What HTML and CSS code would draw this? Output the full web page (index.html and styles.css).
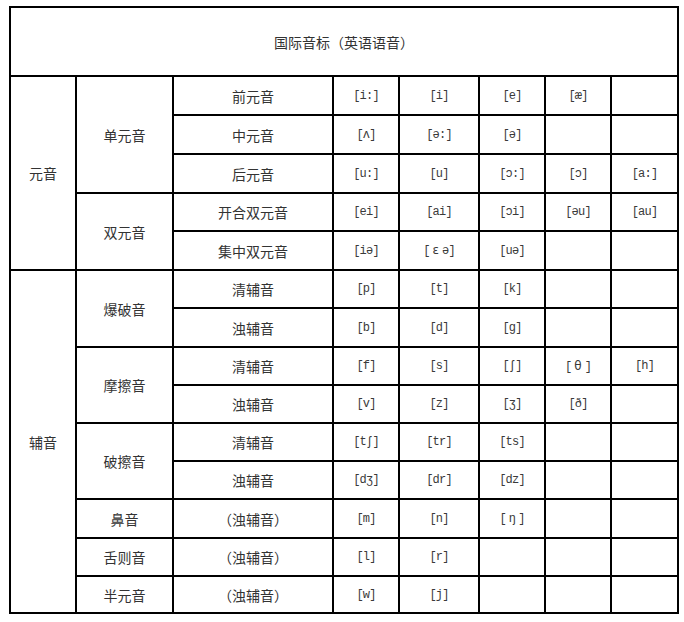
FILE: index.html
```html
<!DOCTYPE html>
<html lang="zh">
<head>
<meta charset="utf-8">
<title>国际音标（英语语音）</title>
<link rel="stylesheet" href="styles.css">
</head>
<body>
<div class="ipa-table">
  <div class="cell title">国际音标（英语语音）</div>

  <div class="cell zh c1 r-vowel">元音</div>
  <div class="cell zh c2 r-dan">单元音</div>
  <div class="cell zh c2 r-shuang">双元音</div>
  <div class="cell zh c1 r-cons">辅音</div>
  <div class="cell zh c2 r-bao">爆破音</div>
  <div class="cell zh c2 r-mo">摩擦音</div>
  <div class="cell zh c2 r-po">破擦音</div>
  <div class="cell zh c2 r-bi">鼻音</div>
  <div class="cell zh c2 r-she">舌则音</div>
  <div class="cell zh c2 r-ban">半元音</div>

  <!-- row 2 -->
  <div class="cell zh c3">前元音</div>
  <div class="cell ph">[i:]</div><div class="cell ph">[i]</div><div class="cell ph">[e]</div><div class="cell ph">[æ]</div><div class="cell"></div>
  <!-- row 3 -->
  <div class="cell zh c3">中元音</div>
  <div class="cell ph">[ʌ]</div><div class="cell ph">[ə:]</div><div class="cell ph">[ə]</div><div class="cell"></div><div class="cell"></div>
  <!-- row 4 -->
  <div class="cell zh c3">后元音</div>
  <div class="cell ph">[u:]</div><div class="cell ph">[u]</div><div class="cell ph">[ɔ:]</div><div class="cell ph">[ɔ]</div><div class="cell ph">[a:]</div>
  <!-- row 5 -->
  <div class="cell zh c3">开合双元音</div>
  <div class="cell ph">[ei]</div><div class="cell ph">[ai]</div><div class="cell ph">[ɔi]</div><div class="cell ph">[əu]</div><div class="cell ph">[au]</div>
  <!-- row 6 -->
  <div class="cell zh c3">集中双元音</div>
  <div class="cell ph">[iə]</div><div class="cell ph"><span>[<span class="gap"></span><span class="wide">ε</span><span class="gap"></span>ə]</span></div><div class="cell ph">[uə]</div><div class="cell"></div><div class="cell"></div>
  <!-- row 7 -->
  <div class="cell zh c3">清辅音</div>
  <div class="cell ph">[p]</div><div class="cell ph">[t]</div><div class="cell ph">[k]</div><div class="cell"></div><div class="cell"></div>
  <!-- row 8 -->
  <div class="cell zh c3">浊辅音</div>
  <div class="cell ph">[b]</div><div class="cell ph">[d]</div><div class="cell ph">[g]</div><div class="cell"></div><div class="cell"></div>
  <!-- row 9 -->
  <div class="cell zh c3">清辅音</div>
  <div class="cell ph">[f]</div><div class="cell ph">[s]</div><div class="cell ph">[ʃ]</div><div class="cell ph"><span>[<span class="gap"></span><span class="wide">θ</span><span class="gap"></span>]</span></div><div class="cell ph">[h]</div>
  <!-- row 10 -->
  <div class="cell zh c3">浊辅音</div>
  <div class="cell ph">[v]</div><div class="cell ph">[z]</div><div class="cell ph">[ʒ]</div><div class="cell ph">[ð]</div><div class="cell"></div>
  <!-- row 11 -->
  <div class="cell zh c3">清辅音</div>
  <div class="cell ph">[tʃ]</div><div class="cell ph">[tr]</div><div class="cell ph">[ts]</div><div class="cell"></div><div class="cell"></div>
  <!-- row 12 -->
  <div class="cell zh c3">浊辅音</div>
  <div class="cell ph">[dʒ]</div><div class="cell ph">[dr]</div><div class="cell ph">[dz]</div><div class="cell"></div><div class="cell"></div>
  <!-- row 13 -->
  <div class="cell zh c3">（浊辅音）</div>
  <div class="cell ph">[m]</div><div class="cell ph">[n]</div><div class="cell ph"><span>[<span class="gap"></span>ŋ<span class="gap"></span>]</span></div><div class="cell"></div><div class="cell"></div>
  <!-- row 14 -->
  <div class="cell zh c3">（浊辅音）</div>
  <div class="cell ph">[l]</div><div class="cell ph">[r]</div><div class="cell"></div><div class="cell"></div><div class="cell"></div>
  <!-- row 15 -->
  <div class="cell zh c3">（浊辅音）</div>
  <div class="cell ph">[w]</div><div class="cell ph">[j]</div><div class="cell"></div><div class="cell"></div><div class="cell"></div>
</div>
</body>
</html>
```

FILE: styles.css
```css
html, body {
  margin: 0;
  padding: 0;
  background: #fff;
}

body {
  padding: 6px 0 0 9px;
}

.ipa-table {
  display: grid;
  width: 670px;
  box-sizing: border-box;
  background: #000;
  padding: 2px;
  gap: 2px;
  grid-template-columns: 64px 95px 158px 64px 78px 64px 64px 65px;
  grid-template-rows: 67px 37px 37px 37px 36px 37px 36px 37px 36px 36px 36px 36px 37px 36px 35px;
  grid-auto-flow: row dense;
}

.cell {
  background: #fff;
  display: flex;
  align-items: center;
  justify-content: center;
  color: #333;
  font-family: "Noto Sans CJK SC", sans-serif;
  font-size: 14px;
  line-height: 1;
  white-space: nowrap;
}

.title {
  grid-column: 1 / -1;
  grid-row: 1;
  font-size: 14px;
}

.c1 { grid-column: 1; }
.c2 { grid-column: 2; }
.c3 { grid-column: 3; }

.r-vowel { grid-row: 2 / span 5; }
.r-cons { grid-row: 7 / span 9; }
.r-dan { grid-row: 2 / span 3; }
.r-shuang { grid-row: 5 / span 2; }
.r-bao { grid-row: 7 / span 2; }
.r-mo { grid-row: 9 / span 2; }
.r-po { grid-row: 11 / span 2; }
.r-bi { grid-row: 13; }
.r-she { grid-row: 14; }
.r-ban { grid-row: 15; }

.ph {
  font-family: "Liberation Mono", "DejaVu Sans Mono", monospace;
  font-size: 12px;
  letter-spacing: -0.8px;
  color: #3a3a3a;
}

.gap {
  display: inline-block;
  width: 3px;
}

.wide {
  font-family: "DejaVu Sans", sans-serif;
  font-size: 12px;
  letter-spacing: 0;
}
```
